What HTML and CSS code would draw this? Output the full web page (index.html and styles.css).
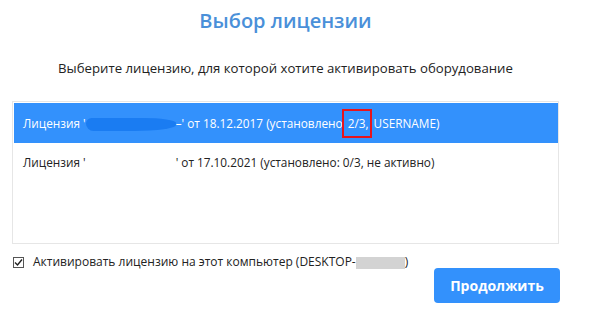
FILE: index.html
```html
<!doctype html>
<html lang="ru">
  <head>
    <meta charset="UTF-8" />
    <title>Выбор лицензии</title>
    <link rel="stylesheet" href="styles.css">
  </head>
  <body>
    <div class="dialog">
      <h1 class="title">Выбор лицензии</h1>
      <p class="subtitle">Выберите лицензию, для которой хотите активировать оборудование</p>

      <div class="license-list">
        <div class="license selected">
          Лицензия '<span class="hidden-name scribble"></span>–' от 18.12.2017 (установлено<span class="mark"> 2/3,</span> USERNAME)
        </div>
        <div class="license">
          Лицензия '<span class="hidden-name"></span>' от 17.10.2021 (установлено: 0/3, не активно)
        </div>
      </div>

      <label class="activate">
        <span class="check">
          <svg width="9" height="9" viewBox="0 0 9 9"><path d="M1 4.6 L3.5 7 L8 1.5" fill="none" stroke="#222" stroke-width="1.4"/></svg>
        </span>
        <span>Активировать лицензию на этот компьютер (DESKTOP-<span class="blur"></span>)</span>
      </label>

      <div class="actions">
        <button class="btn-primary">Продолжить</button>
      </div>
    </div>
  </body>
</html>
```

FILE: styles.css
```css
:root {
  --accent: #3391fc;
  --title: #4a90d9;
  --text: #222222;
  --border: #e6e6e6;
}
body {
  margin: 0;
  padding: 0;
  background: #ffffff;
  font-family: "Open Sans", "Noto Sans", sans-serif;
  color: var(--text);
}

.dialog {
  width: 547px;
  margin-left: 12px;
  padding-top: 6px;
}

.title {
  margin: 0;
  text-align: center;
  font-size: 20px;
  font-weight: 600;
  color: var(--title);
  line-height: 30px;
}
.subtitle {
  margin: 22px 0 0 0;
  text-align: center;
  font-size: 13.2px;
  line-height: 20px;
}

.license-list {
  margin-top: 23px;
  height: 140px;
  border: 1px solid var(--border);
  padding: 1px 0 0 1px;
}
.license {
  height: 38px;
  line-height: 38px;
  padding-left: 9px;
  font-size: 11.8px;
  white-space: nowrap;
}
.license.selected {
  height: 40px;
  line-height: 40px;
  background: var(--accent);
  color: #ffffff;
}
.hidden-name {
  display: inline-block;
  width: 90px;
  height: 12px;
  vertical-align: middle;
}
.hidden-name.scribble {
  background: #1a7cf2;
  border-radius: 6px 40% 50% 8px;
  height: 13px;
}
.mark {
  border: 2px solid #e8141b;
  padding: 4px 1px 5px 1px;
  margin: 0 -1px;
}

.activate {
  display: flex;
  align-items: center;
  gap: 9px;
  margin-top: 11px;
  font-size: 12px;
  line-height: 14px;
}
.check {
  width: 9px;
  height: 9px;
  border: 1px solid #555;
  display: flex;
  align-items: center;
  justify-content: center;
  margin-left: 1px;
}
.blur {
  display: inline-block;
  width: 49px;
  height: 12px;
  background: #d3d3d3;
  vertical-align: middle;
}

.actions {
  display: flex;
  justify-content: flex-end;
  margin-top: -1px;
  margin-right: -1px;
}
.btn-primary {
  width: 126px;
  height: 35px;
  border: none;
  border-radius: 4px;
  background: var(--accent);
  color: #ffffff;
  font-family: inherit;
  font-size: 14px;
  font-weight: 700;
}
```
